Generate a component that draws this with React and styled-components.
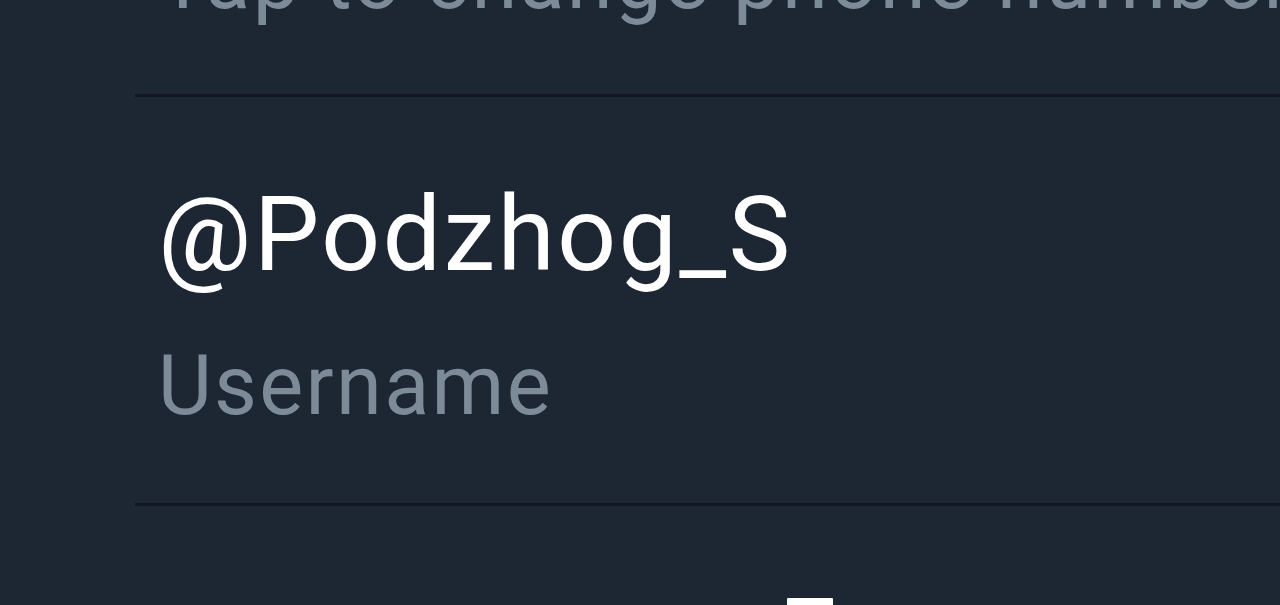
import React from "react";
import styled, { createGlobalStyle } from "styled-components";

const Global = createGlobalStyle`
  html, body { margin: 0; padding: 0; background: #1d2733; overflow: hidden; }
  body { font-family: Roboto, "Noto Sans", "Liberation Sans", sans-serif; }
`;

const Page = styled.div`
  width: 1280px;
  height: 605px;
  overflow: hidden;
  background: #1d2733;
`;

const List = styled.div`
  display: flex;
  flex-direction: column;
  margin-top: -69px;
`;

const Row = styled.div`
  display: flex;
  flex-direction: column;
  margin-left: 135px;
  padding: ${(p) => p.$pad};
  border-bottom: ${(p) => (p.$divider ? "3px solid #111821" : "none")};
`;

const Value = styled.div`
  font-size: 104px;
  line-height: 122px;
  letter-spacing: 2.3px;
  color: #ffffff;
  white-space: nowrap;
`;

const Label = styled.div`
  font-size: 83px;
  line-height: 97px;
  letter-spacing: 2.3px;
  color: #7d8b99;
  white-space: nowrap;
  margin-top: ${(p) => p.$gap || 0}px;
`;

const GlyphTop = styled.div`
  margin-left: 652px;
  width: 46px;
  height: 12px;
  background: #ffffff;
  border-radius: 1px;
`;

export default function App() {
  return (
    <Page>
      <Global />
      <List>
        <Row $divider $pad="0 0 66px 23px">
          <Label>Tap to change phone number</Label>
        </Row>
        <Row $divider $pad="77px 0 69px 23px">
          <Value>@Podzhog_S</Value>
          <Label $gap={41}>Username</Label>
        </Row>
        <Row $pad="92px 0 0 0">
          <GlyphTop />
        </Row>
      </List>
    </Page>
  );
}
